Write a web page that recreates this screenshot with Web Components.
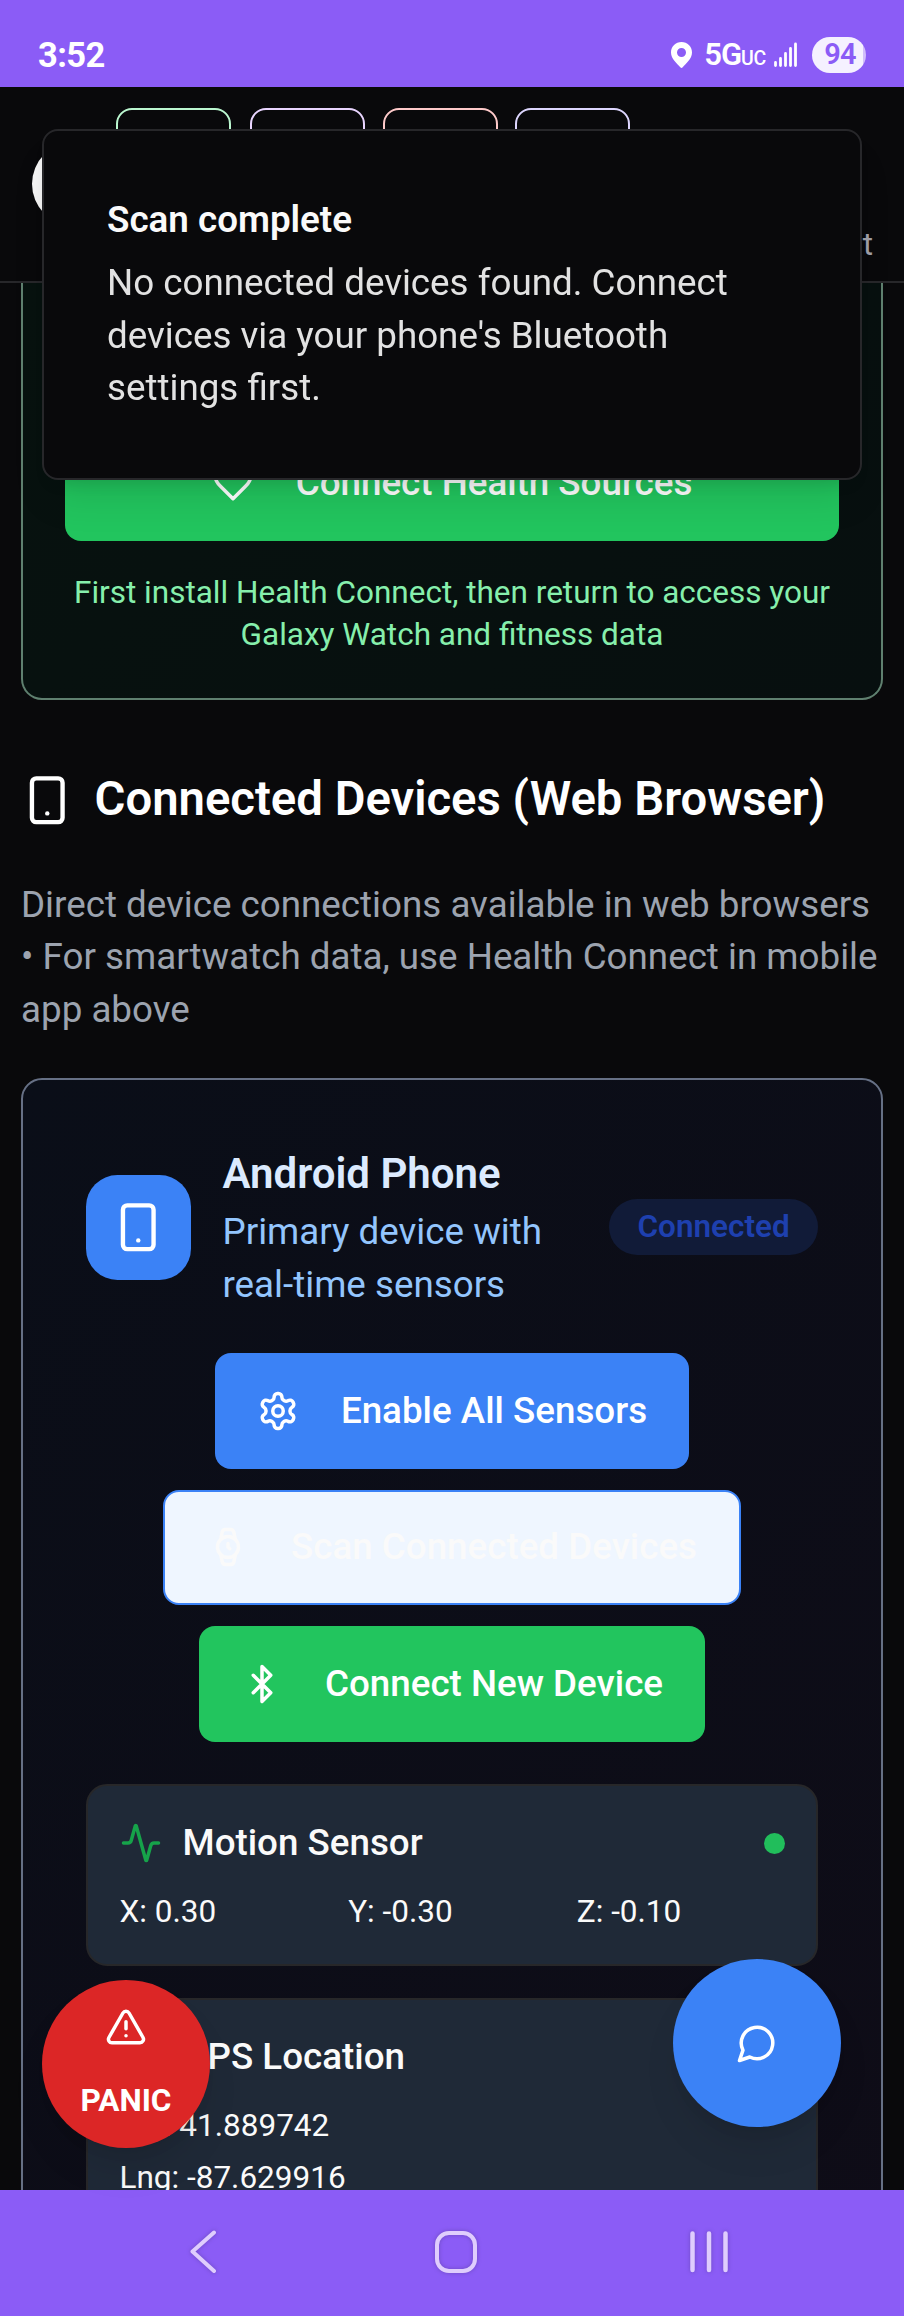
<!DOCTYPE html>
<html lang="en">
<head>
<meta charset="utf-8">
<title>Devices</title>
<style>
html,body{margin:0;background:#09090b}
body{font-family:Roboto,"Noto Sans",sans-serif;color:#fafafa;font-size:36.75px;line-height:52.5px}
</style>
</head>
<body>
<phone-screen>
  <status-bar slot="status"></status-bar>
  <app-header></app-header>
  <health-card>
    <action-button tone="green" wide icon="heart">Connect Health Sources</action-button>
    <span slot="hint">First install Health Connect, then return to access your Galaxy Watch and fitness data</span>
  </health-card>
  <section-intro>
    <span slot="title">Connected Devices (Web Browser)</span>
    Direct device connections available in web browsers • For smartwatch data, use Health Connect in mobile app above
  </section-intro>
  <device-card>
    <span slot="name">Android Phone</span>
    <span slot="about">Primary device with<br>real-time sensors</span>
    <span slot="state">Connected</span>
    <action-button slot="actions" tone="blue" icon="gear">Enable All Sensors</action-button>
    <action-button slot="actions" tone="outline" icon="watch">Scan Connected Devices</action-button>
    <action-button slot="actions" tone="green" icon="bluetooth">Connect New Device</action-button>
    <sensor-tile icon="activity" live>
      <span slot="title">Motion Sensor</span>
      <span>X: 0.30</span><span>Y: -0.30</span><span>Z: -0.10</span>
    </sensor-tile>
    <sensor-tile icon="pin" stacked>
      <span slot="title">GPS Location</span>
      <span>Lat: 41.889742</span><span>Lng: -87.629916</span>
    </sensor-tile>
  </device-card>
  <float-button slot="over" tone="red" icon="alert">PANIC</float-button>
  <float-button slot="over" tone="blue" icon="chat"></float-button>
  <toast-message slot="over">
    <span slot="title">Scan complete</span>
    No connected devices found. Connect devices via your phone's Bluetooth settings first.
  </toast-message>
  <nav-bar slot="nav"></nav-bar>
</phone-screen>
<script>
const ICONS = {
  phone:'<rect width="14" height="20" x="5" y="2" rx="2" ry="2"/><path d="M12 18h.01"/>',
  heart:'<path d="M19 14c1.49-1.46 3-3.21 3-5.5A5.5 5.5 0 0 0 16.5 3c-1.76 0-3 .5-4.5 2-1.5-1.5-2.74-2-4.5-2A5.5 5.5 0 0 0 2 8.5c0 2.3 1.5 4.05 3 5.5l7 7Z"/>',
  gear:'<path d="M12.22 2h-.44a2 2 0 0 0-2 2v.18a2 2 0 0 1-1 1.73l-.43.25a2 2 0 0 1-2 0l-.15-.08a2 2 0 0 0-2.73.73l-.22.38a2 2 0 0 0 .73 2.73l.15.1a2 2 0 0 1 1 1.72v.51a2 2 0 0 1-1 1.74l-.15.09a2 2 0 0 0-.73 2.73l.22.38a2 2 0 0 0 2.73.73l.15-.08a2 2 0 0 1 2 0l.43.25a2 2 0 0 1 1 1.73V20a2 2 0 0 0 2 2h.44a2 2 0 0 0 2-2v-.18a2 2 0 0 1 1-1.73l.43-.25a2 2 0 0 1 2 0l.15.08a2 2 0 0 0 2.73-.73l.22-.39a2 2 0 0 0-.73-2.73l-.15-.08a2 2 0 0 1-1-1.74v-.5a2 2 0 0 1 1-1.74l.15-.09a2 2 0 0 0 .73-2.73l-.22-.38a2 2 0 0 0-2.73-.73l-.15.08a2 2 0 0 1-2 0l-.43-.25a2 2 0 0 1-1-1.73V4a2 2 0 0 0-2-2z"/><circle cx="12" cy="12" r="3"/>',
  watch:'<circle cx="12" cy="12" r="6"/><path d="M12 10v2l1 1"/><path d="m16.13 7.66-.81-4.05a2 2 0 0 0-2-1.61h-2.68a2 2 0 0 0-2 1.61l-.78 4.05"/><path d="m7.88 16.36.8 4a2 2 0 0 0 2 1.61h2.72a2 2 0 0 0 2-1.61l.81-4.05"/>',
  bluetooth:'<path d="m7 7 10 10-5 5V2l5 5L7 17"/>',
  activity:'<path d="M22 12h-2.48a2 2 0 0 0-1.93 1.46l-2.35 8.36a.25.25 0 0 1-.48 0L9.24 2.18a.25.25 0 0 0-.48 0l-2.35 8.36A2 2 0 0 1 4.49 12H2"/>',
  pin:'<path d="M20 10c0 5-5.5 10.2-7.4 11.8a1 1 0 0 1-1.2 0C9.5 20.200 4 15 4 10a8 8 0 0 1 16 0"/><circle cx="12" cy="10" r="3"/>',
  alert:'<path d="m21.73 18-8-14a2 2 0 0 0-3.480 0l-8 14A2 2 0 0 0 4 21h16a2 2 0 0 0 1.730-3"/><path d="M12 9v4"/><path d="M12 17h.01"/>',
  chat:'<path d="M7.900 20A9 9 0 1 0 4 16.100L2 22Z"/>'
};
const icon = (name, size) => `<svg width="${size}" height="${size}" viewBox="0 0 24 24" fill="none" stroke="currentColor" stroke-width="2" stroke-linecap="round" stroke-linejoin="round" style="display:block;flex:none">${ICONS[name]}</svg>`;

function element(tag, render) {
  customElements.define(tag, class extends HTMLElement {
    constructor() { super(); this.attachShadow({ mode: 'open' }); }
    connectedCallback() { this.shadowRoot.innerHTML = render(this); }
  });
}

element('phone-screen', () => `<style>
:host{display:flex;flex-direction:column;position:relative;width:904px;height:2316px;overflow:hidden;background:#09090b}
main{flex:1;min-height:0;overflow:hidden}
</style><slot name="status"></slot><main><slot></slot></main><slot name="nav"></slot><slot name="over"></slot>`);

element('status-bar', () => `<style>
:host{display:flex;flex:none;box-sizing:border-box;height:87px;background:#8b5cf6;color:#fff;padding:23px 38px 0 38px;align-items:center;line-height:36px}
.time{flex:1;font-size:34.500px;font-weight:700;letter-spacing:-.6px;padding-bottom:1px}
.pin{margin-right:12px}
.net{font-size:31px;font-weight:600;letter-spacing:-1px}
.uc{font-size:19.500px;font-weight:500;letter-spacing:-.3px;margin-right:8px}
.row{display:flex;align-items:baseline;padding-top:4px}
.bars{margin-right:14px}
.batt{box-sizing:border-box;width:54px;height:36px;border-radius:18px;background:linear-gradient(90deg,#f5f1ff 51px,#d1bdfb 51px);color:#8b5cf6;font-size:29px;font-weight:600;text-align:center;letter-spacing:-.8px;line-height:34px;padding-left:2px}
svg{display:block}
</style><span class="time">3:52</span>
<svg class="pin" width="21" height="26" viewBox="0 0 21 26"><path fill="#fff" fill-rule="evenodd" d="M10.500 0C4.700 0 0 4.600 0 10.400C0 17 6 21 9.300 25.300Q10.500 26.500 11.700 25.300C15 21 21 17 21 10.400C21 4.600 16.300 0 10.500 0ZM10.500 6a4.500 4.500 0 1 1 0 9a4.500 4.500 0 1 1 0-9Z"/></svg>
<span class="row"><span class="net">5G</span><span class="uc">UC</span></span>
<svg class="bars" width="24" height="26" viewBox="0 0 24 26" stroke="#fff" stroke-width="2.800" stroke-linecap="round"><path d="M1.500 20.500V23.500M6.500 16.500V23.500M11.500 11.500V23.500M16.500 6.500V23.500M21.500 2V23.500"/></svg>
<span class="batt">94</span>`);

element('app-header', () => `<style>
:host{display:flex;box-sizing:border-box;height:196px;border-bottom:2px solid #27272a;background:#09090b;padding:21px 31px 0 32px}
.logo{width:84px;height:84px;border-radius:50%;background:#f7f7f7;margin-top:34px}
.tabs{display:flex;gap:18.500px;flex:1}
.tabs i{box-sizing:border-box;width:115px;height:84px;border:2px solid;border-radius:16px}
.more{align-self:flex-end;font-size:31.500px;line-height:42px;color:#a1a1aa;margin-bottom:15px}
</style><span class="logo"></span><span class="tabs"><i style="color:#bbf7d0"></i><i style="color:#e9d5ff"></i><i style="color:#fecaca"></i><i style="color:#ddd6fe;margin-left:-1.700px"></i></span><span class="more">t</span>`);

element('health-card', () => `<style>
:host{display:flex;flex-direction:column;justify-content:flex-end;box-sizing:border-box;height:417px;margin:0 21px;padding:0 42px 42px;border:2px solid #5f806f;border-top:0;border-radius:0 0 21px 21px;background:linear-gradient(135deg,#07120f,#070f0f)}
p{margin:31.500px 0 0;font-size:31.500px;line-height:42px;color:#86efac;text-align:center}
</style><slot></slot><p><slot name="hint"></slot></p>`);

element('action-button', el => `<style>
:host{display:flex;box-sizing:border-box;height:115.500px;padding:0 42px;gap:42px;align-items:center;justify-content:center;border-radius:16px;font-weight:500;color:#fff;white-space:nowrap;background:#3b82f6}
:host([tone=green]){background:#22c55e}
:host([tone=outline]){background:#eff6ff;color:#fafafa;border:2px solid #3b82f6}
</style>${icon(el.getAttribute('icon'), 42)}<span><slot></slot></span>`);

element('section-intro', () => `<style>
:host{display:block;margin:63px 21px 0}
h2{display:flex;align-items:center;gap:21px;margin:0 0 42px;font-size:47.250px;line-height:73.500px;font-weight:600;color:#fff}
p{margin:0;color:#9ca3af}
</style><h2>${icon('phone', 52.5)}<span><slot name="title"></slot></span></h2><p><slot></slot></p>`);

element('device-card', () => `<style>
:host{display:block;box-sizing:border-box;height:1400px;margin:42px 21px 0;padding:63px;border:2px solid #667085;border-radius:21px;background:linear-gradient(135deg,#0a0e18,#0f0c17)}
.head{display:flex;align-items:center}
.badge-icon{display:grid;place-items:center;width:105px;height:105px;border-radius:31.500px;background:#3b82f6;color:#fff;margin-right:31.500px}
.text{flex:1;color:#93c5fd}
h3{margin:0;font-size:42px;line-height:61.500px;padding-bottom:1.500px;font-weight:600;color:#dbeafe}
.state{box-sizing:border-box;height:56.500px;border:2px solid transparent;border-radius:29px;background:#111b38;background-clip:border-box;padding:5.250px 26.250px;font-size:31.500px;line-height:42px;font-weight:600;color:#1e40af}
.actions{display:flex;flex-direction:column;align-items:center;gap:21px;margin:42px 0}
.tiles{display:grid;gap:31.500px}
</style><div class="head"><span class="badge-icon">${icon('phone', 52.5)}</span><div class="text"><h3><slot name="name"></slot></h3><slot name="about"></slot></div><span class="state"><slot name="state"></slot></span></div>
<div class="actions"><slot name="actions"></slot></div><div class="tiles"><slot></slot></div>`);

element('sensor-tile', el => `<style>
:host{display:block;border:2px solid #272729;border-radius:21px;background:#1f2937;padding:31.500px}
.head{display:flex;align-items:center;gap:21px;font-weight:500;color:#fafafa}
.head svg{color:#16a34a}
.name{flex:1}
.dot{width:21px;height:21px;border-radius:50%;background:#21be5b}
.values{display:grid;grid-template-columns:repeat(3,1fr);gap:21px;margin-top:21px;font-size:31.500px;line-height:42px}
:host([stacked]) .values{grid-template-columns:1fr;gap:10.500px}
</style><div class="head">${icon(el.getAttribute('icon'), 42)}<span class="name"><slot name="title"></slot></span>${el.hasAttribute('live') ? '<span class="dot"></span>' : ''}</div><div class="values"><slot></slot></div>`);

element('float-button', el => `<style>
:host{position:absolute;box-sizing:border-box;display:flex;flex-direction:column;align-items:center;justify-content:center;gap:31.500px;width:168px;height:168px;border-radius:50%;color:#fff;font-size:31.500px;line-height:42px;font-weight:700;box-shadow:0 26px 39px -8px rgba(0,0,0,.1),0 10px 16px -10px rgba(0,0,0,.1)}
:host([tone=red]){left:42px;top:1980px;background:#dc2626}
:host([tone=blue]){left:673px;top:1959px;background:#3b82f6}
</style>${icon(el.getAttribute('icon'), 42)}${el.textContent ? '<span><slot></slot></span>' : ''}`);

element('toast-message', () => `<style>
:host{position:absolute;left:42px;top:129px;box-sizing:border-box;width:820px;height:351px;padding:63px;border:2px solid #27272a;border-radius:16px;background:#09090b;box-shadow:0 26px 39px -8px rgba(0,0,0,.11),0 10px 16px -8px rgba(0,0,0,.12)}
b{display:block;font-weight:600;margin-bottom:10.500px}
p{margin:0;opacity:.9}
</style><b><slot name="title"></slot></b><p><slot></slot></p>`);

element('nav-bar', () => `<style>
:host{display:flex;flex:none;height:126px;background:#8b5cf6;align-items:center;justify-content:space-between;padding:0 171px 2px 183px;box-sizing:border-box}
svg{display:block;filter:drop-shadow(0 0 2px rgba(70,50,130,.45))}
.home{margin-left:3px}
g{fill:none;stroke:#dfcdfd;stroke-linecap:round;stroke-linejoin:round}
</style>
<svg width="40" height="50" viewBox="0 0 40 50"><g stroke-width="4"><path d="M31 5.500L9.500 24.500L31 44"/></g></svg>
<svg class="home" width="50" height="50" viewBox="0 0 50 50"><g stroke-width="4"><rect x="6" y="6" width="38" height="38" rx="12"/></g></svg>
<svg width="48" height="50" viewBox="0 0 48 50"><g stroke-width="4.500"><path d="M7.500 6.500V43M24 6.500V43M40.500 6.500V43"/></g></svg>`);
</script>
</body>
</html>
